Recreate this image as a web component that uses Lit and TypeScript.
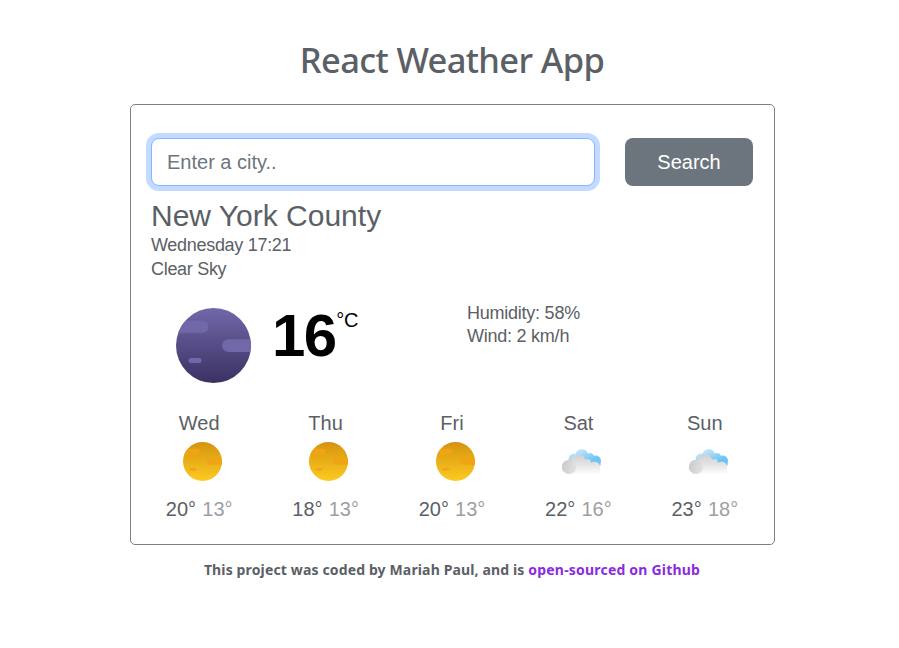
import { LitElement, html, css, svg } from "lit";
import { customElement, property } from "lit/decorators.js";

type Sky = "clear-day" | "clear-night" | "clouds";

@customElement("weather-icon")
class WeatherIcon extends LitElement {
  @property() sky: Sky = "clear-day";

  static styles = css`
    :host { display: block; }
    svg { display: block; width: 100%; height: 100%; overflow: visible; }
  `;

  private orb(top: string, bottom: string, patch: string) {
    return svg`
      <defs>
        <linearGradient id="orb" x1="0.5" y1="0" x2="0.5" y2="1">
          <stop offset="0" stop-color=${top} />
          <stop offset="1" stop-color=${bottom} />
        </linearGradient>
        <clipPath id="disc"><circle cx="38" cy="38" r="37.5" /></clipPath>
      </defs>
      <circle cx="38" cy="38" r="37.5" fill="url(#orb)" />
      <g clip-path="url(#disc)" fill=${patch}>
        <rect x="-10" y="13.3" width="43" height="12" rx="6" />
        <rect x="46.6" y="31.7" width="43" height="12.7" rx="6.35" />
        <rect x="13" y="50.5" width="13" height="5" rx="2.5" />
      </g>`;
  }

  private clouds() {
    return svg`
      <defs>
        <linearGradient id="blue" gradientUnits="userSpaceOnUse" x1="18" y1="0" x2="25" y2="17">
          <stop offset="0.05" stop-color="#c3e6fb" />
          <stop offset="0.85" stop-color="#70c3f5" />
        </linearGradient>
        <linearGradient id="pale" gradientUnits="userSpaceOnUse" x1="0" y1="6" x2="0" y2="26">
          <stop offset="0" stop-color="#d0d0d0" />
          <stop offset="0.5" stop-color="#e4e4e4" />
          <stop offset="1" stop-color="#ffffff" />
        </linearGradient>
        <linearGradient id="puff" x1="0" y1="0.35" x2="1" y2="0.65">
          <stop offset="0" stop-color="#cacaca" />
          <stop offset="1" stop-color="#e3e3e3" />
        </linearGradient>
      </defs>
      <g fill="url(#blue)">
        <circle cx="12" cy="10.5" r="5.4" />
        <circle cx="19.7" cy="6.8" r="6.3" />
        <circle cx="28" cy="8.4" r="3.8" />
        <circle cx="33.8" cy="12" r="5.1" />
        <rect x="12" y="7" width="20" height="9" />
        <rect x="33" y="11" width="5.6" height="6" />
      </g>
      <g fill="url(#pale)">
        <circle cx="16.2" cy="13" r="7.2" />
        <circle cx="25.6" cy="13.8" r="3.2" />
        <path d="M7 25.5V14H26L28.5 14.5Q33 12 36.5 14.8L38 17V25.5Z" />
      </g>
      <circle cx="7" cy="18.4" r="7.2" fill="url(#puff)" />`;
  }

  render() {
    if (this.sky === "clouds") {
      return html`<svg viewBox="0 0 39 39"><g transform="translate(0 6.5)">${this.clouds()}</g></svg>`;
    }
    return html`<svg viewBox="0.5 0.5 75 75">
      ${this.sky === "clear-night"
        ? this.orb("#7068a9", "#3b3163", "#7068a9")
        : this.orb("#d6930f", "#fccb22", "#eea413")}
    </svg>`;
  }
}

@customElement("forecast-day")
class ForecastDay extends LitElement {
  @property() day = "";
  @property() sky: Sky = "clear-day";
  @property({ type: Number }) high = 0;
  @property({ type: Number }) low = 0;

  static styles = css`
    :host { display: flex; flex-direction: column; align-items: center; font-size: 20px; line-height: 30px; }
    .icon { width: 39px; height: 39px; margin: 4px 0 13px 6.6px; }
    .low { opacity: 0.6; margin-left: 0.6px; }
  `;

  render() {
    return html`
      <div>${this.day}</div>
      <weather-icon class="icon" .sky=${this.sky}></weather-icon>
      <div><span>${this.high}°</span> <span class="low">${this.low}°</span></div>
    `;
  }
}

const forecast: { day: string; sky: Sky; high: number; low: number }[] = [
  { day: "Wed", sky: "clear-day", high: 20, low: 13 },
  { day: "Thu", sky: "clear-day", high: 18, low: 13 },
  { day: "Fri", sky: "clear-day", high: 20, low: 13 },
  { day: "Sat", sky: "clouds", high: 22, low: 16 },
  { day: "Sun", sky: "clouds", high: 23, low: 18 },
];

@customElement("app-root")
class AppRoot extends LitElement {
  static styles = css`
    :host {
      display: block;
      box-sizing: border-box;
      height: 648px;
      padding: 36px 124px 0 130px;
      background: #fff;
      color: #5b6066;
      font-family: "Liberation Sans", Arial, sans-serif;
    }
    * { box-sizing: border-box; }
    h1, h2, p { margin: 0; }
    h1 {
      height: 68px;
      padding-right: 1px;
      font: 500 34.5px/48px "Noto Sans", sans-serif;
      letter-spacing: -0.65px;
      text-align: center;
      white-space: nowrap;
    }
    .card {
      height: 441px;
      border: 1px solid #808080;
      border-radius: 5px;
      padding: 33px 21px 0 20px;
    }
    .search { display: flex; gap: 30px; height: 48px; }
    .search input {
      width: 444px;
      border: 1px solid #86b7fe;
      border-radius: 8px;
      padding: 0 15px;
      outline: none;
      box-shadow: 0 0 0 5px #c2dbfe;
      font: 20px "Liberation Sans", Arial, sans-serif;
      color: #5b6066;
    }
    .search input::placeholder { color: #6c757d; opacity: 1; }
    .search button {
      width: 128px;
      border: 0;
      border-radius: 8px;
      padding: 0;
      background: #6c757d;
      color: #fff;
      font: 20px "Liberation Sans", Arial, sans-serif;
    }
    h2 { margin-top: 12px; font-weight: 400; font-size: 30px; line-height: 35px; }
    .detail { font-size: 18px; line-height: 24px; letter-spacing: -0.3px; }
    .now { display: flex; height: 127px; padding: 26px 0 0 25px; }
    .orb { width: 75px; height: 75px; margin-top: 1px; }
    .temp { display: flex; width: 194px; margin-left: 21px; color: #000; }
    .value { font-weight: 700; font-size: 60px; line-height: 58px; letter-spacing: -1.5px; }
    .unit { font-size: 20px; line-height: 26px; letter-spacing: -0.3px; margin-left: 0.5px; }
    .facts { margin-left: 1px; margin-top: -5px; font-size: 18px; line-height: 23px; letter-spacing: -0.24px; }
    .week { display: grid; grid-template-columns: repeat(5, 1fr); margin: 0 -15px 0 -15px; }
    .credit {
      margin-top: 14px;
      padding-right: 1px;
      font: 700 14px/22px "Noto Sans", sans-serif;
      letter-spacing: 0.14px;
      text-align: center;
      white-space: nowrap;
    }
    .credit a { color: #8a2be2; letter-spacing: 0.2px; text-decoration: none; }
  `;

  render() {
    return html`
      <h1>React Weather App</h1>
      <main class="card">
        <form class="search">
          <input type="search" placeholder="Enter a city.." />
          <button type="button">Search</button>
        </form>
        <h2>New York County</h2>
        <p class="detail">Wednesday 17:21</p>
        <p class="detail">Clear Sky</p>
        <section class="now">
          <weather-icon class="orb" sky="clear-night"></weather-icon>
          <div class="temp"><span class="value">16</span><span class="unit">°C</span></div>
          <div class="facts">
            <div>Humidity: 58%</div>
            <div>Wind: 2 km/h</div>
          </div>
        </section>
        <section class="week">
          ${forecast.map(
            (f) => html`<forecast-day .day=${f.day} .sky=${f.sky} .high=${f.high} .low=${f.low}></forecast-day>`
          )}
        </section>
      </main>
      <p class="credit">
        This project was coded by Mariah Paul, and is <a href="#">open-sourced on Github</a>
      </p>
    `;
  }
}
